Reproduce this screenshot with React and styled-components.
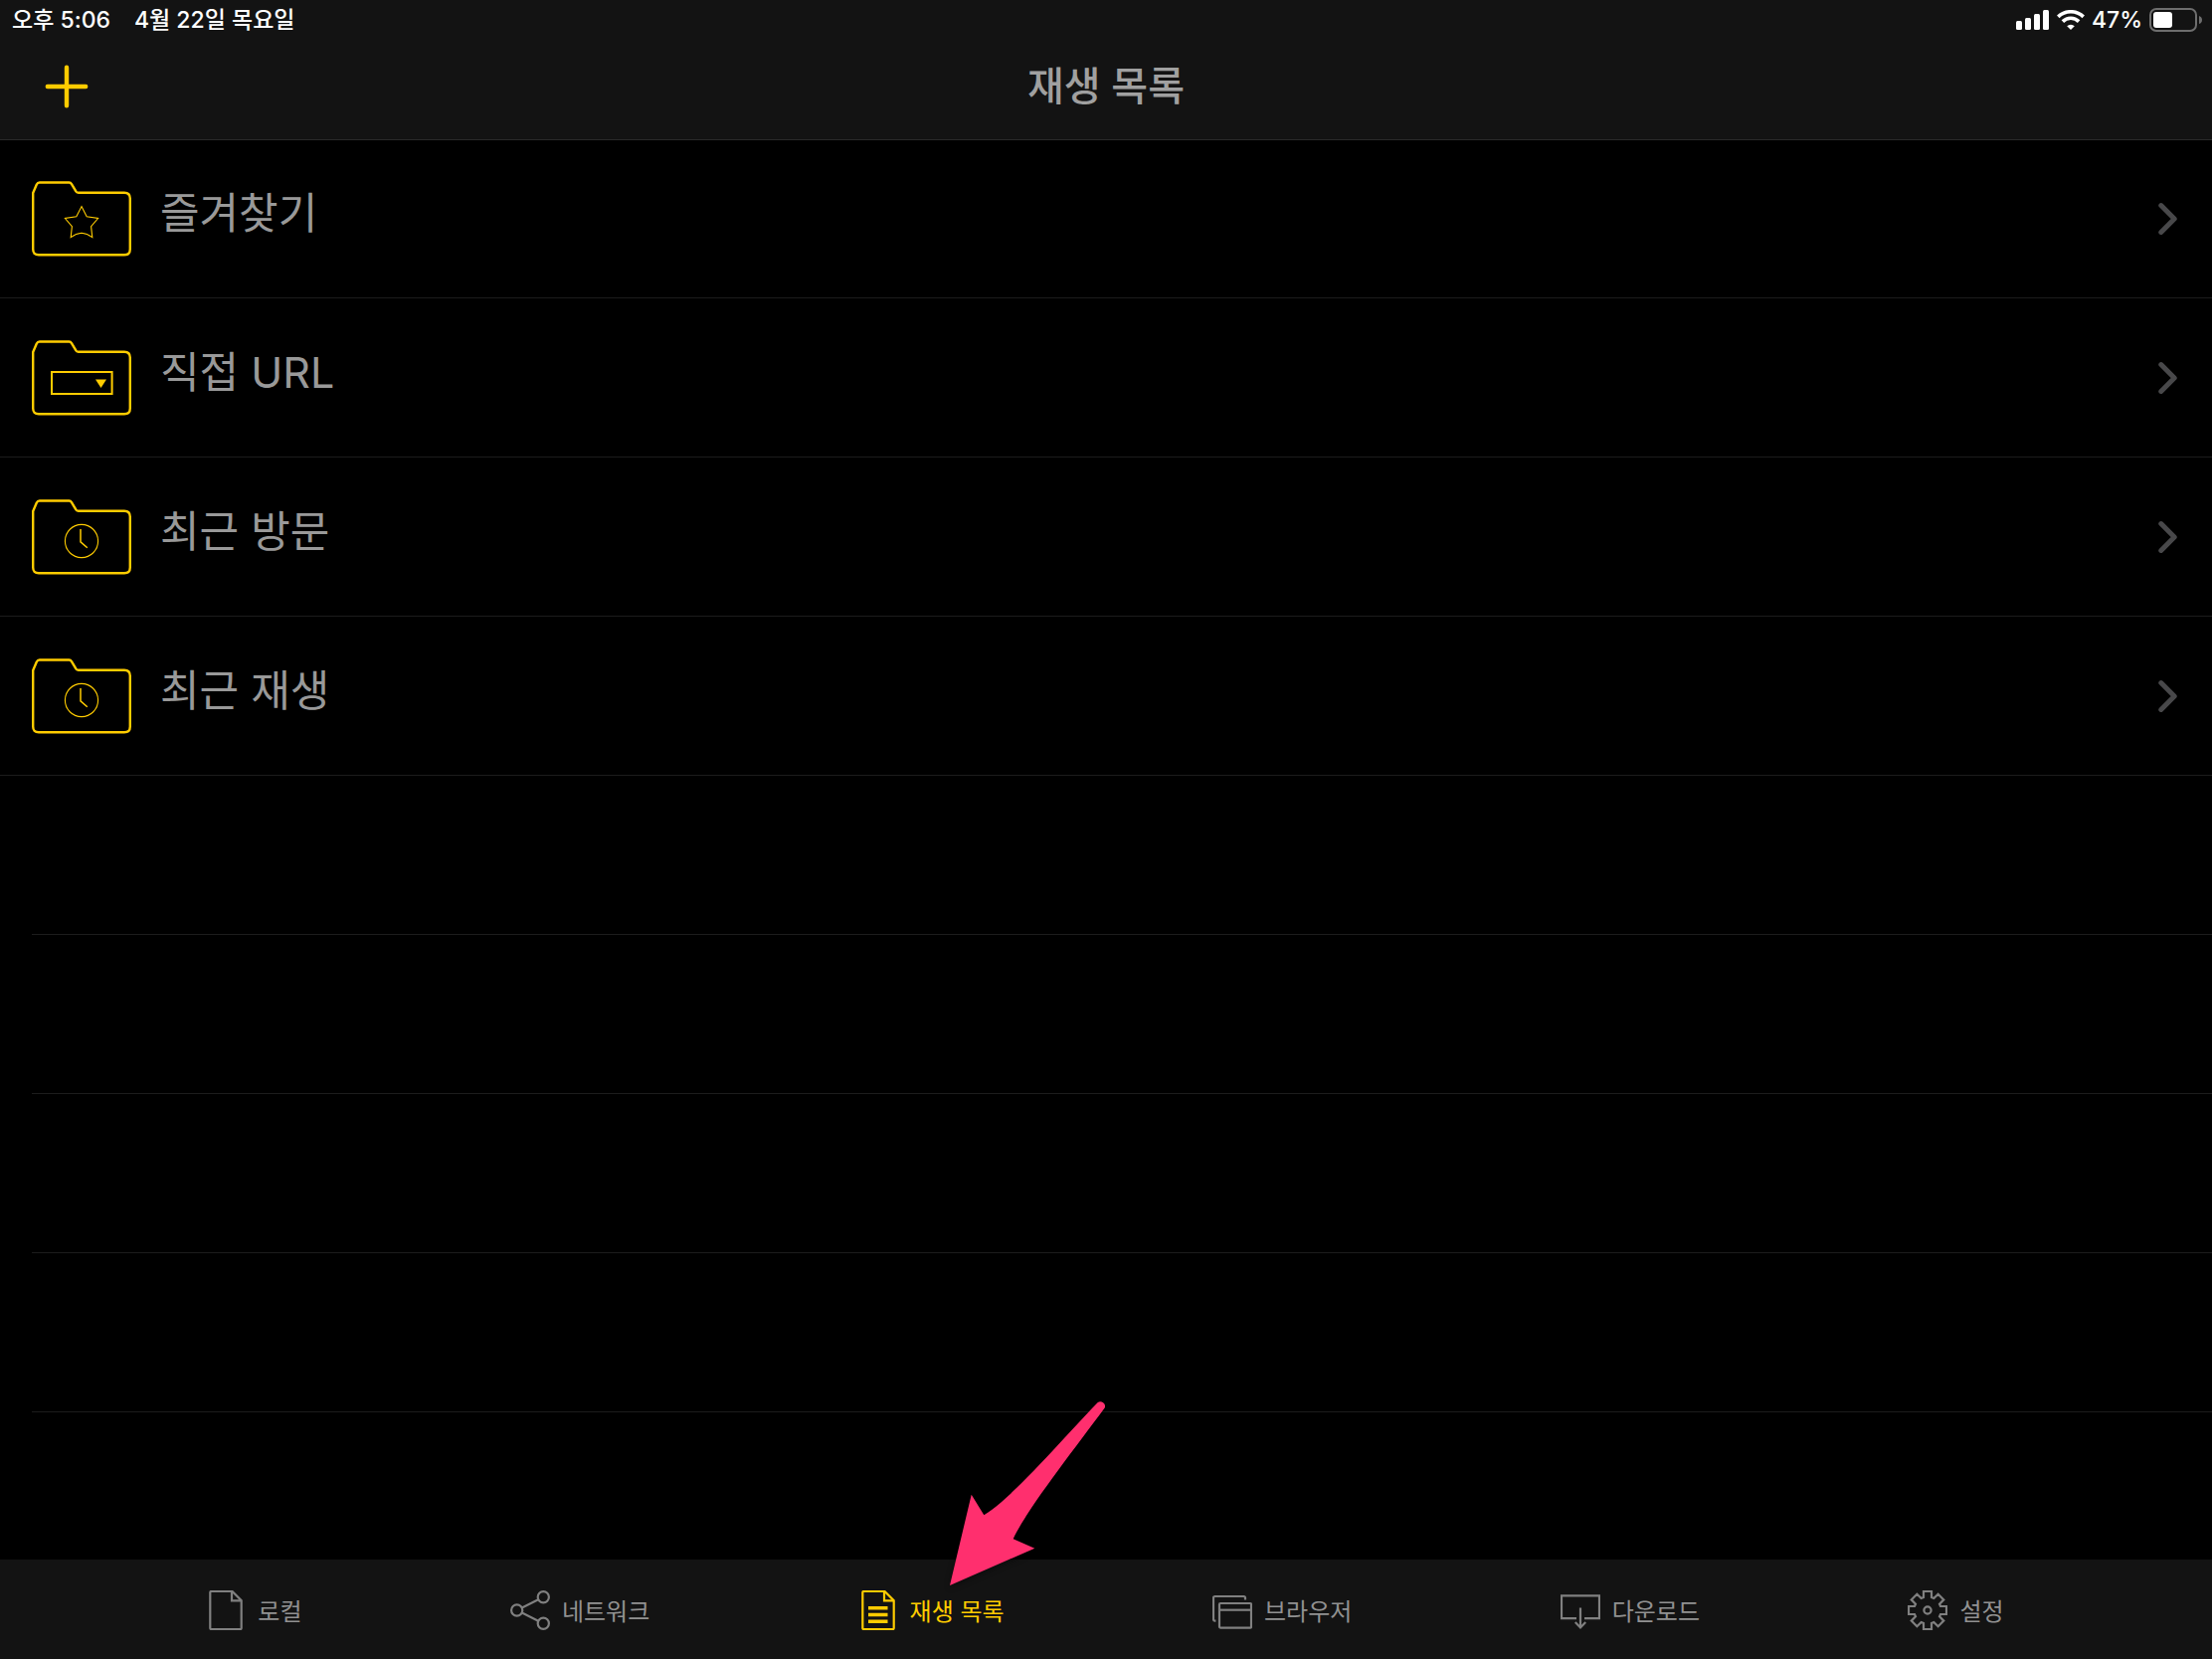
import React from 'react'
import styled, { createGlobalStyle } from 'styled-components'


const toothPath = () => {
    const points = []
    for (let i = 0; i < 8; i++) {
        const turn = (i * Math.PI) / 4
        const corners = [[-4, -13], [-4, -19], [4, -19], [4, -13]]
        corners.forEach(([x, y]) => {
            const px = 20 + x * Math.cos(turn) - y * Math.sin(turn)
            const py = 20 + x * Math.sin(turn) + y * Math.cos(turn)
            points.push(`${px.toFixed(2)} ${py.toFixed(2)}`)
        })
    }
    return `M${points.join('L')}Z`
}

const pagePath = (
    <>
        <path d="M5.3 1H26.5L35.7 10.2V38Q35.7 39 34.7 39H5.3Q4.3 39 4.3 38V2Q4.3 1 5.3 1Z" />
        <path d="M26 1V10.3H35.7" />
    </>
)

const tabIcons = {
    local: pagePath,
    network: (
        <>
            <circle cx="6.7" cy="20" r="5.6" />
            <circle cx="33.3" cy="6.7" r="5.6" />
            <circle cx="33.3" cy="33.3" r="5.6" />
            <path d="M11.8 17.4L28.2 9.2M11.8 22.6L28.2 30.8" />
        </>
    ),
    playlist: (
        <>
            {pagePath}
            <path d="M10 17.7H29.5M10 24.5H29.5M10 31.3H29.5" strokeWidth="3.4" />
        </>
    ),
    browser: (
        <>
            <path d="M3.4 30.6H2.5Q1 30.6 1 29V7.5Q1 6 2.5 6H31.5Q33 6 33 7.5V9.4" />
            <rect x="7" y="13" width="32" height="24.6" rx="1" />
            <path d="M7 19.7H39" />
        </>
    ),
    download: (
        <>
            <path d="M16 28.2H1V5.4H39V28.2H24" />
            <path d="M20 17.5V37.6M14.8 32L20 37.4L25.2 32" />
        </>
    ),
    settings: (
        <>
            <path d={toothPath()} />
            <circle cx="20" cy="20" r="3.6" />
        </>
    ),
}

const folderMarks = {
    star: (
        <path
            d="M50 25.6L55.2 35.8L66.6 37.5L59.6 45.6L60.8 56.6Q55.5 52.6 50 52.2Q44.5 52.6 39.2 56.6L40.4 45.6L33.4 37.5L44.8 35.8Z"
            strokeWidth="1.1"
        />
    ),
    url: (
        <>
            <rect x="20" y="32" width="60.6" height="22" strokeWidth="2" />
            <path d="M64 39.4H75L69.5 48Z" fill="#ffcc00" stroke="none" />
        </>
    ),
    clock: (
        <>
            <circle cx="50" cy="42" r="16.6" strokeWidth="1.1" />
            <path d="M49 30V42.8L55.8 48.8" strokeWidth="1.5" />
        </>
    ),
}

const folders = [
    { title: '즐겨찾기', mark: 'star' },
    { title: '직접 URL', mark: 'url' },
    { title: '최근 방문', mark: 'clock' },
    { title: '최근 재생', mark: 'clock' },
]

const tabs = [
    { name: 'local', label: '로컬' },
    { name: 'network', label: '네트워크' },
    { name: 'playlist', label: '재생 목록', active: true },
    { name: 'browser', label: '브라우저' },
    { name: 'download', label: '다운로드' },
    { name: 'settings', label: '설정' },
]

const emptyRows = [1, 2, 3, 4]


function StatusBar() {
    return (
        <Status>
            <StatusGroup $gap="24px">
                <span>오후 5:06</span>
                <span>4월 22일 목요일</span>
            </StatusGroup>
            <StatusGroup $gap="7px">
                <svg width="34" height="20" viewBox="0 0 34 20" fill="#fff">
                    <rect x="0" y="11" width="6" height="9" rx="1.5" />
                    <rect x="9" y="8" width="6" height="12" rx="1.5" />
                    <rect x="18" y="4" width="6" height="16" rx="1.5" />
                    <rect x="27" y="0" width="6" height="20" rx="1.5" />
                </svg>
                <svg width="28" height="20" viewBox="0 0 28 20" fill="none" stroke="#fff" strokeWidth="3.6">
                    <path d="M1.3 6.9A18.2 18.2 0 0 1 26.7 6.9" />
                    <path d="M5.9 11.6A11.6 11.6 0 0 1 22.1 11.6" />
                    <path d="M14 20L10.2 16.2A5.4 5.4 0 0 1 17.8 16.2Z" fill="#fff" stroke="none" />
                </svg>
                <span>47%</span>
                <svg width="54" height="24" viewBox="0 0 54 24">
                    <rect x="1" y="1" width="46" height="22" rx="6" fill="none" stroke="#6e6e6e" strokeWidth="2" />
                    <rect x="4" y="4" width="19" height="16" rx="3" fill="#fff" />
                    <path d="M50 8Q53 9 53 12T50 16Z" fill="#6e6e6e" />
                </svg>
            </StatusGroup>
        </Status>
    )
}

export default function App() {
    return (
        <>
            <GlobalStyle />
            <Page>
                <Header>
                    <StatusBar />
                    <NavBar>
                        <AddButton aria-label="추가">
                            <svg width="44" height="44" viewBox="0 0 44 44" stroke="#ffcc00" strokeWidth="4.4" strokeLinecap="round">
                                <path d="M22 2.8V41.2M2.8 22H41.2" />
                            </svg>
                        </AddButton>
                        <Heading>재생 목록</Heading>
                    </NavBar>
                </Header>

                <List>
                    {folders.map((folder) => (
                        <Item key={folder.title}>
                            <Row href="#">
                                <svg width="100" height="76" viewBox="0 0 100 76" fill="none" stroke="#ffcc00" strokeWidth="2.4">
                                    <path d="M1.2 12L4.8 3.5Q5.8 1.5 7.8 1.5H37.5Q39 1.5 40 3.2L44.2 10.2Q45 11.7 46.8 11.7H93Q98.8 11.7 98.8 17.5V68.5Q98.8 74.3 93 74.3H7Q1.2 74.3 1.2 68.5Z" />
                                    {folderMarks[folder.mark]}
                                </svg>
                                <RowTitle>{folder.title}</RowTitle>
                                <svg width="20" height="34" viewBox="0 0 20 34" fill="none" stroke="#48484a" strokeWidth="5" strokeLinecap="round" strokeLinejoin="round">
                                    <path d="M2.8 3.6L16.2 17L2.8 30.4" />
                                </svg>
                            </Row>
                        </Item>
                    ))}
                    {emptyRows.map((n) => (
                        <EmptyItem key={n} aria-hidden="true" />
                    ))}
                </List>

                <TabBar>
                    {tabs.map((tab) => (
                        <Tab key={tab.name} $active={tab.active}>
                            <svg width="40" height="40" viewBox="0 0 40 40" fill="none" stroke="currentColor" strokeWidth="2.2">
                                {tabIcons[tab.name]}
                            </svg>
                            <TabLabel $active={tab.active}>{tab.label}</TabLabel>
                            {tab.active && (
                                <Pointer width="160" height="190" viewBox="0 0 160 190" aria-hidden="true">
                                    <path
                                        d="M2 188L23.7 96.7L36.3 117.3C62 102 108 49 150.5 4.2A4.7 4.7 0 0 1 157.7 9.6C124 55 78 114 65.7 141.3L87.3 150.7Z"
                                        fill="#ff2f6e"
                                    />
                                </Pointer>
                            )}
                        </Tab>
                    ))}
                </TabBar>
            </Page>
        </>
    )
}


const GlobalStyle = createGlobalStyle`
    * {
        box-sizing: border-box;
    }
    body {
        margin: 0;
        background: #000;
        font-family: Inter, "Noto Sans CJK KR", sans-serif;
    }
    svg {
        display: block;
        flex-shrink: 0;
    }
    button {
        padding: 0;
        border: 0;
        background: none;
        font: inherit;
        cursor: pointer;
    }
`;

const Page = styled.div`
    display: flex;
    flex-direction: column;
    min-height: 100vh;
`;

const Header = styled.header`
    position: relative;
    height: 140px;
    background: #131313;
    box-shadow: 0 1px 0 #2a2a2a;
`;

const Status = styled.div`
    display: flex;
    justify-content: space-between;
    align-items: center;
    height: 40px;
    padding: 0 9px 0 12px;
    color: #fff;
    font-size: 23px;
    font-weight: 500;
    line-height: 28px;
`;

const StatusGroup = styled.div`
    display: flex;
    align-items: center;
    gap: ${(props) => props.$gap};
`;

const NavBar = styled.div`
    display: grid;
    grid-template-columns: 1fr auto 1fr;
    align-items: center;
    height: 94px;
    padding: 0 45px;
`;

const AddButton = styled.button`
    justify-self: start;
`;

const Heading = styled.h1`
    margin: 0;
    color: #a0a0a0;
    font-size: 40px;
    font-weight: 500;
    line-height: 56px;
`;

const List = styled.ul`
    flex: 1;
    margin: 0;
    padding: 0;
    list-style: none;
`;

const Item = styled.li`
    height: 160px;
    border-bottom: 1px solid #1c1c1c;
`;

const EmptyItem = styled(Item)`
    margin-left: 32px;
`;

const Row = styled.a`
    display: flex;
    align-items: center;
    height: 100%;
    padding: 0 34px 0 32px;
    text-decoration: none;
`;

const RowTitle = styled.span`
    flex: 1;
    padding: 0 29px 12px;
    color: #999;
    font-size: 43px;
    line-height: 56px;
`;

const TabBar = styled.nav`
    display: flex;
    justify-content: space-evenly;
    height: 100px;
    padding-top: 2px;
    background: #131313;
`;

const Tab = styled.button`
    position: relative;
    display: flex;
    align-items: center;
    gap: 12px;
    color: ${(props) => (props.$active ? '#ffcc00' : '#808080')};
`;

const TabLabel = styled.span`
    padding: 3px 2px 0 0;
    color: ${(props) => (props.$active ? '#ffcc00' : '#919191')};
    font-size: 24px;
    line-height: 32px;
`;

const Pointer = styled.svg`
    position: absolute;
    left: 90px;
    bottom: 72px;
    filter: drop-shadow(0 2px 3px rgba(0, 0, 0, 0.4));
    pointer-events: none;
`;
